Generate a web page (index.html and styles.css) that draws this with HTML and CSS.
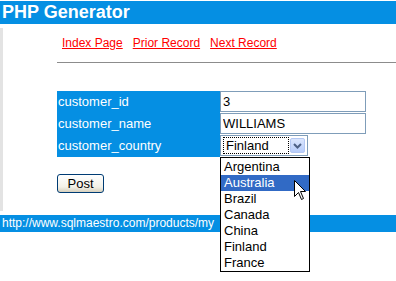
FILE: index.html
```html
<!DOCTYPE html>
<html lang="en">
<head>
    <meta charset="UTF-8">
    <title>PHP Generator</title>
    <link rel="stylesheet" href="styles.css">
</head>
<body>
    <!-- Page header -->
    <div class="header">PHP Generator</div>

    <!-- Record editor -->
    <div class="main">
        <div class="nav">
            <a href="#">Index Page</a>
            <a href="#">Prior Record</a>
            <a href="#">Next Record</a>
        </div>
        <div class="rule"></div>

        <table class="record">
            <tr>
                <td class="label">customer_id</td>
                <td class="value"><input class="field" type="text" value="3"></td>
            </tr>
            <tr>
                <td class="label">customer_name</td>
                <td class="value"><input class="field" type="text" value="WILLIAMS"></td>
            </tr>
            <tr>
                <td class="label">customer_country</td>
                <td class="value">
                    <div class="select">
                        <span class="select-value">Finland</span>
                        <span class="select-btn">
                            <svg width="9" height="6" viewBox="0 0 9 6">
                                <path d="M1 1 L4.5 4.5 L8 1" fill="none" stroke="#4d6185" stroke-width="2"/>
                            </svg>
                        </span>
                        <ul class="dropdown">
                            <li>Argentina</li>
                            <li class="active">Australia</li>
                            <li>Brazil</li>
                            <li>Canada</li>
                            <li>China</li>
                            <li>Finland</li>
                            <li>France</li>
                            <svg class="cursor" width="13" height="21" viewBox="0 0 13 21">
                                <path d="M0.5 0.5 L0.5 16.5 L4.5 12.5 L7.5 19.5 L9.5 18.5 L6.5 11.5 L11.5 11.5 Z" fill="#fff" stroke="#000" stroke-width="1"/>
                            </svg>
                        </ul>
                    </div>
                </td>
            </tr>
        </table>

        <button class="post">Post</button>
    </div>

    <div class="footer">http://www.sqlmaestro.com/products/my</div>
</body>
</html>
```

FILE: styles.css
```css
html, body {
    min-height: 100vh;
}
body {
    margin: 0;
    font-family: "Liberation Sans", Arial, sans-serif;
    background: #fff;
    color: #000;
}
.header {
    margin-top: 1px;
    height: 23px;
    line-height: 23px;
    padding-left: 2px;
    background: #058fe3;
    color: #fff;
    font-size: 18px;
    font-weight: bold;
}
.main {
    margin-top: 4px;
    height: 183px;
    border-left: 3px solid #e3e3e3;
}
.nav {
    display: flex;
    gap: 10px;
    padding: 8px 0 0 59px;
    font-size: 12px;
    line-height: 14px;
}
.nav a {
    color: #ff0000;
    text-decoration: underline;
}
.rule {
    margin: 12px 0 0 54px;
    height: 1px;
    background: #8c8c8c;
}
.record {
    margin: 28px 0 0 54px;
    border-collapse: collapse;
    border-spacing: 0;
    font-size: 13px;
}
.record td {
    padding: 0;
    height: 22px;
    vertical-align: top;
}
.label {
    width: 162px;
    padding-left: 1px !important;
    background: #058fe3;
    color: #fff;
    line-height: 21px;
}
.value {
    background: #fff;
}
.field {
    display: block;
    box-sizing: border-box;
    width: 146px;
    height: 21px;
    margin: 0;
    padding: 0 2px;
    border: 1px solid #7f9db9;
    font-family: "Liberation Sans", Arial, sans-serif;
    font-size: 13px;
    color: #000;
    outline: none;
}
.select {
    position: relative;
    box-sizing: border-box;
    display: flex;
    align-items: center;
    gap: 1px;
    width: 88px;
    height: 21px;
    padding: 2px;
    border: 1px solid #7f9db9;
}
.select-value {
    flex: 1;
    height: 15px;
    line-height: 15px;
    padding-left: 2px;
    border: 1px dotted #000;
}
.select-btn {
    display: flex;
    align-items: center;
    justify-content: center;
    box-sizing: border-box;
    width: 15px;
    height: 15px;
    border: 1px solid #b4c8f3;
    border-radius: 2px;
    background: linear-gradient(#dbe6fd, #b7cdfb);
}
.dropdown {
    position: absolute;
    left: -1px;
    top: 21px;
    box-sizing: border-box;
    width: 90px;
    margin: 0;
    padding: 1px 0 0;
    list-style: none;
    border: 1px solid #000;
    background: #fff;
    z-index: 2;
}
.dropdown li {
    height: 16px;
    line-height: 16px;
    padding-left: 3px;
}
.dropdown li.active {
    background: #316ac5;
    color: #fff;
}
.cursor {
    position: absolute;
    left: 73px;
    top: 22px;
}
.post {
    display: block;
    margin: 17px 0 0 54px;
    width: 47px;
    height: 19px;
    padding: 0;
    border: 1px solid #003c74;
    border-radius: 3px;
    background: linear-gradient(#ffffff, #f3f1e8 70%, #d6d0bd);
    font-family: "Liberation Sans", Arial, sans-serif;
    font-size: 13px;
    color: #000;
}
.footer {
    margin-top: 4px;
    height: 17px;
    line-height: 17px;
    padding-left: 2px;
    background: #058fe3;
    color: #fff;
    font-size: 12px;
}
```
